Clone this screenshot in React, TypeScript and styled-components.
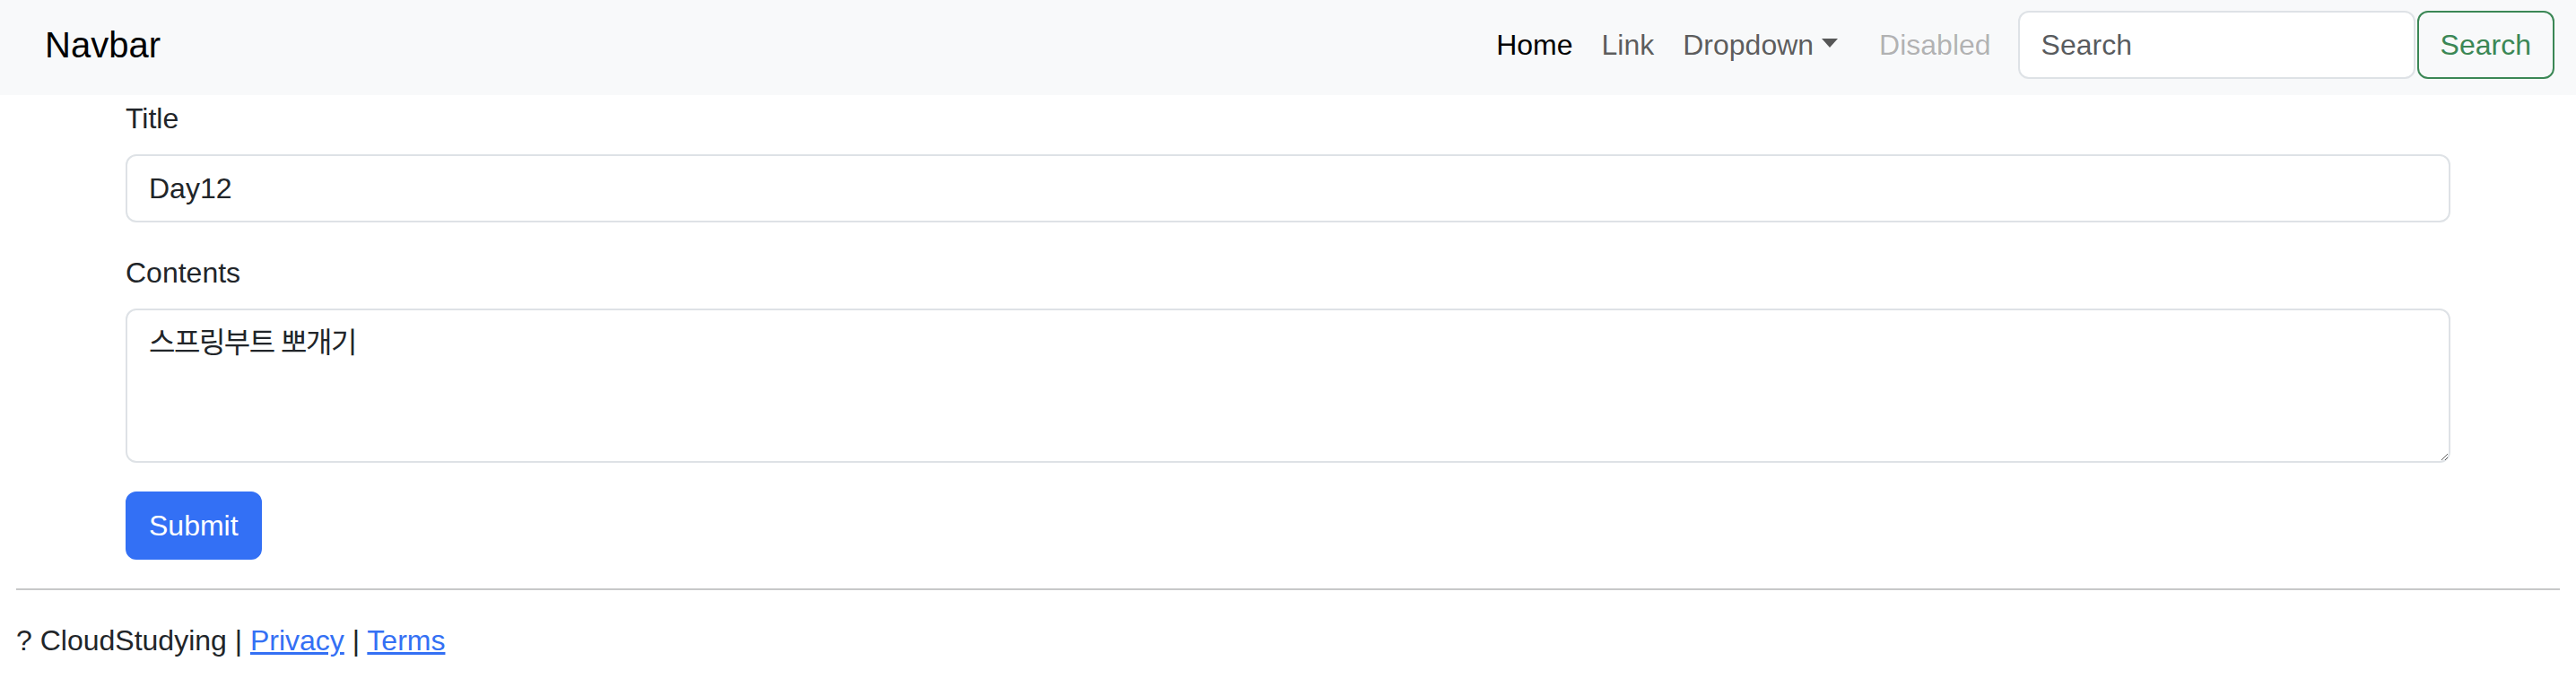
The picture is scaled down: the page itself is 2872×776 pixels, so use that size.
import React from "react";
import styled, { createGlobalStyle } from "styled-components";

const GlobalStyle = createGlobalStyle`
  html, body { margin: 0; padding: 0; background: #ffffff; }
  body {
    font-family: "Liberation Sans", "Noto Sans CJK KR", Arial, sans-serif;
    font-size: 32px;
    line-height: 1.5;
    color: #212529;
  }
  *, *::before, *::after { box-sizing: border-box; }
`;

const Navbar = styled.nav`
  display: flex;
  align-items: center;
  height: 106px;
  padding: 12px 24px 18px 50px;
  background: #f8f9fa;
`;

const Brand = styled.a`
  font-size: 40px;
  line-height: 60px;
  color: #000000;
  text-decoration: none;
`;

const NavList = styled.ul`
  display: flex;
  align-items: center;
  list-style: none;
  margin: 0 0 0 auto;
  padding: 0;
`;

type Tone = "active" | "normal" | "disabled";

const toneColor: Record<Tone, string> = {
  active: "#000000",
  normal: "rgba(0, 0, 0, 0.65)",
  disabled: "rgba(0, 0, 0, 0.3)",
};

const NavLink = styled.a<{ $tone: Tone }>`
  display: flex;
  align-items: center;
  padding: 14px 16px;
  color: ${(p) => toneColor[p.$tone]};
  text-decoration: none;
  white-space: nowrap;
`;

const Caret = styled.span`
  display: inline-block;
  margin-left: 9px;
  margin-right: 14px;
  width: 0;
  height: 0;
  border-top: 10px solid currentColor;
  border-left: 9px solid transparent;
  border-right: 9px solid transparent;
  transform: translateY(-2px);
`;

const SearchForm = styled.form`
  display: flex;
  align-items: center;
  gap: 2px;
  margin-left: 14px;
`;

const SearchInput = styled.input`
  width: 443px;
  height: 76px;
  padding: 12px 24px;
  font: inherit;
  color: #212529;
  background: #ffffff;
  border: 2px solid #dee2e6;
  border-radius: 12px;
  outline: none;
  &::placeholder { color: rgba(33, 37, 41, 0.75); }
`;

const OutlineButton = styled.button`
  height: 76px;
  padding: 12px 24px;
  font: inherit;
  color: #3b8755;
  background: transparent;
  border: 2px solid #3b8755;
  border-radius: 12px;
`;

const Container = styled.main`
  max-width: 2640px;
  margin: 0 auto;
  padding: 2px 24px 0;
`;

const Field = styled.div`
  margin-bottom: 32px;
`;

const Label = styled.label`
  display: block;
  margin-bottom: 16px;
`;

const TextInput = styled.input`
  display: block;
  width: 100%;
  height: 76px;
  padding: 12px 24px;
  font: inherit;
  color: #212529;
  background: #ffffff;
  border: 2px solid #dee2e6;
  border-radius: 12px;
  outline: none;
`;

const TextArea = styled.textarea`
  display: block;
  width: 100%;
  height: 172px;
  padding: 12px 24px;
  font: inherit;
  color: #212529;
  letter-spacing: -1.5px;
  background: #ffffff;
  border: 2px solid #dee2e6;
  border-radius: 12px;
  outline: none;
  resize: vertical;
`;

const SubmitButton = styled.button`
  height: 76px;
  padding: 12px 24px;
  font: inherit;
  color: #ffffff;
  background: #3370f5;
  border: 2px solid #3370f5;
  border-radius: 12px;
`;

const Footer = styled.footer`
  padding: 0 18px;
`;

const Divider = styled.hr`
  margin: 32px 0;
  border: 0;
  border-top: 2px solid #212529;
  opacity: 0.25;
`;

const FooterText = styled.p`
  margin: 0;
`;

const FooterLink = styled.a`
  color: #3470f4;
  text-decoration: underline;
`;

export default function App() {
  return (
    <>
      <GlobalStyle />
      <Navbar>
        <Brand href="#">Navbar</Brand>
        <NavList>
          <li><NavLink $tone="active" href="#">Home</NavLink></li>
          <li><NavLink $tone="normal" href="#">Link</NavLink></li>
          <li>
            <NavLink $tone="normal" href="#">
              Dropdown<Caret />
            </NavLink>
          </li>
          <li><NavLink $tone="disabled">Disabled</NavLink></li>
        </NavList>
        <SearchForm onSubmit={(e) => e.preventDefault()}>
          <SearchInput type="search" placeholder="Search" aria-label="Search" />
          <OutlineButton type="submit">Search</OutlineButton>
        </SearchForm>
      </Navbar>
      <Container>
        <form onSubmit={(e) => e.preventDefault()}>
          <Field>
            <Label htmlFor="title">Title</Label>
            <TextInput id="title" type="text" defaultValue="Day12" />
          </Field>
          <Field>
            <Label htmlFor="contents">Contents</Label>
            <TextArea id="contents" rows={3} defaultValue="스프링부트 뽀개기" />
          </Field>
          <SubmitButton type="submit">Submit</SubmitButton>
        </form>
      </Container>
      <Footer>
        <Divider />
        <FooterText>
          ? CloudStudying | <FooterLink href="#">Privacy</FooterLink> |{" "}
          <FooterLink href="#">Terms</FooterLink>
        </FooterText>
      </Footer>
    </>
  );
}
